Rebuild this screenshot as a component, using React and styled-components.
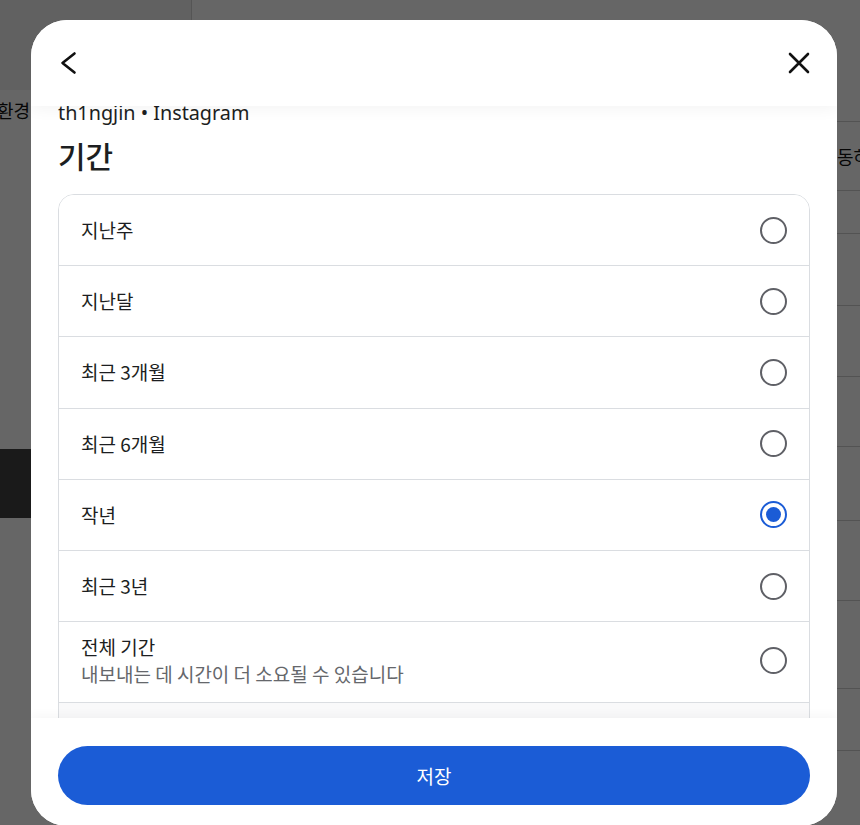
import React, { useState } from "react";
import styled, { createGlobalStyle } from "styled-components";

const Global = createGlobalStyle`
  * { box-sizing: border-box; }
  html, body { margin: 0; padding: 0; overflow: hidden; }
  body { font-family: "Noto Sans CJK KR", "Noto Sans", sans-serif; background: #fff; }
`;

/* ---------- underlying page ---------- */
const Page = styled.div`
  display: grid;
  grid-template-columns: 192px 1fr;
  height: 825px;
  width: 860px;
  background: #fff;
`;

const Sidebar = styled.aside`
  border-right: 1px solid #d4d4d4;
  display: flex;
  flex-direction: column;
`;

const SideTop = styled.div`
  height: 90px;
  background: #f2f2f2;
`;

const SideItem = styled.div`
  height: 40px;
  display: flex;
  align-items: center;
  margin-left: -3px;
  font-size: 18px;
  color: #111;
`;

const SideSpacer = styled.div`
  height: 319px;
`;

const DarkButton = styled.div`
  height: 69px;
  background: #424242;
  margin-right: 20px;
`;

const Main = styled.main`
  display: flex;
  flex-direction: column;
  padding-top: 121px;
`;

const BgRow = styled.div`
  height: ${(p) => p.$h}px;
  border-top: 1px solid #d0d0d0;
  display: flex;
  align-items: center;
  padding-left: 645px;
  font-size: 18px;
  color: #111;
  white-space: nowrap;
  overflow: hidden;
`;

/* ---------- modal ---------- */
const Overlay = styled.div`
  position: fixed;
  inset: 0;
  background: rgba(0, 0, 0, 0.6);
  padding: 20px 0 0 31px;
`;

const Modal = styled.div`
  width: 806px;
  height: 806px;
  background: #fff;
  border-radius: 36px;
  display: flex;
  flex-direction: column;
  overflow: hidden;
`;

const Header = styled.div`
  height: 86px;
  flex: none;
  display: flex;
  align-items: center;
  justify-content: space-between;
  padding: 0 24px 0 23px;
  position: relative;
  z-index: 2;
  background: #fff;
  box-shadow: 0 4px 14px rgba(0, 0, 0, 0.045);
`;

const IconButton = styled.button`
  width: 28px;
  height: 28px;
  padding: 0;
  border: none;
  background: none;
  display: flex;
  cursor: pointer;
`;

const Body = styled.div`
  flex: 1;
  overflow: hidden;
  padding: 0 27px;
  position: relative;
  z-index: 1;
`;

const Account = styled.div`
  margin-top: -4px;
  font-family: "Noto Sans", "Noto Sans CJK KR", sans-serif;
  font-size: 19.8px;
  line-height: 22px;
  color: #1c1e21;
`;

const Title = styled.h1`
  margin: 12px 0 20px;
  font-size: 30px;
  line-height: 38px;
  font-weight: 500;
  color: #1c1e21;
`;

const Card = styled.div`
  border: 1px solid #dadde1;
  border-radius: 16px;
  overflow: hidden;
`;

const Row = styled.label`
  display: flex;
  align-items: center;
  justify-content: space-between;
  min-height: ${(p) => (p.$tall ? 81 : 71.2)}px;
  padding: ${(p) => (p.$tall ? "11px 22px 14px" : "0 22px")};
  border-top: ${(p) => (p.$first ? "none" : "1px solid #dadde1")};
  background: ${(p) => (p.$faded ? "#f9f9fa" : "#fff")};
  cursor: pointer;
  &:first-child {
    min-height: 70.2px;
  }
`;

const RowText = styled.div`
  display: flex;
  flex-direction: column;
`;

const RowLabel = styled.span`
  font-size: 19px;
  line-height: 26px;
  color: ${(p) => (p.$faded ? "#c4c6ca" : "#1c1e21")};
`;

const RowSub = styled.span`
  font-size: 19px;
  line-height: 28px;
  color: #65676b;
`;

const Radio = styled.span`
  width: 27px;
  height: 27px;
  flex: none;
  border-radius: 50%;
  border: 2.6px solid ${(p) => (p.$on ? "#1b5cd6" : "#5f6066")};
  display: flex;
  align-items: center;
  justify-content: center;
  &::after {
    content: "";
    width: 15px;
    height: 15px;
    border-radius: 50%;
    background: ${(p) => (p.$on ? "#1b5cd6" : "transparent")};
  }
`;

const Footer = styled.div`
  flex: none;
  height: 108px;
  padding: 28px 27px 21px;
  background: #fff;
  position: relative;
  z-index: 2;
  box-shadow: 0 -3px 10px rgba(0, 0, 0, 0.035);
`;

const SaveButton = styled.button`
  width: 100%;
  height: 59px;
  border: none;
  border-radius: 30px;
  background: #1b5cd6;
  color: #fff;
  font-family: "Noto Sans CJK KR", sans-serif;
  font-size: 19px;
  font-weight: 400;
  cursor: pointer;
`;

const options = [
  { label: "지난주" },
  { label: "지난달" },
  { label: "최근 3개월" },
  { label: "최근 6개월" },
  { label: "작년" },
  { label: "최근 3년" },
  { label: "전체 기간", sub: "내보내는 데 시간이 더 소요될 수 있습니다" },
];

const bgRows = [
  { h: 69, t: "동하" },
  { h: 43 },
  { h: 72 },
  { h: 71 },
  { h: 70 },
  { h: 74 },
  { h: 80 },
  { h: 88 },
  { h: 62 },
  { h: 80 },
];

export default function App() {
  const [sel, setSel] = useState(4);
  return (
    <>
      <Global />
      <Page>
        <Sidebar>
          <SideTop />
          <SideItem>환경</SideItem>
          <SideSpacer />
          <DarkButton />
        </Sidebar>
        <Main>
          {bgRows.map((r, i) => (
            <BgRow key={i} $h={r.h}>
              {r.t || ""}
            </BgRow>
          ))}
        </Main>
      </Page>
      <Overlay>
        <Modal>
          <Header>
            <IconButton aria-label="뒤로">
              <svg width="28" height="28" viewBox="0 0 28 28" fill="none">
                <path
                  d="M20.5 4.5 L8.5 14 L20.5 23.5"
                  stroke="#111"
                  strokeWidth="2.6"
                  strokeLinecap="round"
                  strokeLinejoin="round"
                />
              </svg>
            </IconButton>
            <IconButton aria-label="닫기">
              <svg width="28" height="28" viewBox="0 0 28 28" fill="none">
                <path
                  d="M5 5 L23 23 M23 5 L5 23"
                  stroke="#111"
                  strokeWidth="2.6"
                  strokeLinecap="round"
                />
              </svg>
            </IconButton>
          </Header>
          <Body>
            <Account>th1ngjin • Instagram</Account>
            <Title>기간</Title>
            <Card>
              {options.map((o, i) => (
                <Row
                  key={o.label}
                  $first={i === 0}
                  $tall={!!o.sub}
                  onClick={() => setSel(i)}
                >
                  <RowText>
                    <RowLabel>{o.label}</RowLabel>
                    {o.sub && <RowSub>{o.sub}</RowSub>}
                  </RowText>
                  <Radio $on={sel === i} />
                </Row>
              ))}
              <Row $faded>
                <RowText>
                  <RowLabel $faded>파일 형식</RowLabel>
                </RowText>
              </Row>
            </Card>
          </Body>
          <Footer>
            <SaveButton>저장</SaveButton>
          </Footer>
        </Modal>
      </Overlay>
    </>
  );
}
